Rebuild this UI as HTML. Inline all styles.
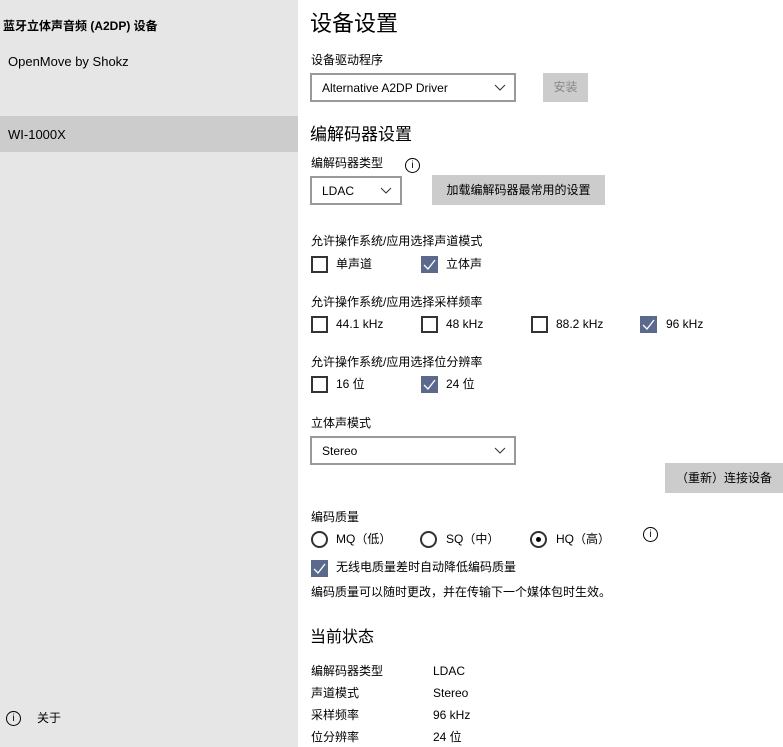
<!DOCTYPE html><html><head><meta charset="utf-8"><style>
body{margin:0;width:783px;height:747px;position:relative;overflow:hidden;background:#fff;font-family:"Liberation Sans","Noto Sans CJK SC",sans-serif;font-size:12px;color:#000}
.a{position:absolute;white-space:nowrap;line-height:17px}
#left{position:absolute;left:0;top:0;width:298px;height:747px;background:#e6e6e6}
.sel{position:absolute;left:0;top:116px;width:298px;height:36px;background:#cccccc}
.h1{font-size:22px;line-height:30px}.h2{font-size:17px;line-height:24px}.h3{font-size:16px;line-height:22px}
.dd{position:absolute;border:2px solid #999;background:#fff;box-sizing:border-box;height:29px;font-size:12px}
.dd span{position:absolute;left:10px;top:6px}
.dd svg{position:absolute;right:8px;top:9px}
.btn{position:absolute;background:#ccc;font-size:12px;text-align:center;box-sizing:border-box}
.cb{position:absolute;width:17px;height:17px;box-sizing:border-box;border:2px solid #333;background:#fff}
.cb.on{background:#5b6a8c;border:none}
.rd{position:absolute;width:17px;height:17px;box-sizing:border-box;border:2px solid #333;border-radius:50%}
.info{position:absolute;width:15px;height:15px;box-sizing:border-box;border:1px solid #000;border-radius:50%;font-size:10px;text-align:center;line-height:13px}
</style></head><body>
<div id="left"><div class="sel"></div></div>
<div class="a" style="left:3px;top:18px;font-weight:bold;font-size:12px">蓝牙立体声音频 (A2DP) 设备</div>
<div class="a" style="left:8px;top:53px;font-size:13px">OpenMove by Shokz</div>
<div class="a" style="left:8px;top:126px;font-size:13px">WI-1000X</div>
<div class="info" style="left:6px;top:711px">i</div>
<div class="a" style="left:37px;top:710px">关于</div>

<div class="a h1" style="left:310px;top:9px">设备设置</div>
<div class="a" style="left:311px;top:52px">设备驱动程序</div>
<div class="dd" style="left:310px;top:73px;width:206px"><span>Alternative A2DP Driver</span><svg width="12" height="8"><path d="M1 1L6 6L11 1" stroke="#333" fill="none"/></svg></div>
<div class="btn" style="left:543px;top:73px;width:45px;height:29px;line-height:29px;color:#888">安装</div>
<div class="a h2" style="left:310px;top:123px">编解码器设置</div>
<div class="a" style="left:311px;top:155px">编解码器类型</div>
<div class="info" style="left:405px;top:158px">i</div>
<div class="dd" style="left:310px;top:176px;width:92px"><span>LDAC</span><svg width="12" height="8"><path d="M1 1L6 6L11 1" stroke="#333" fill="none"/></svg></div>
<div class="btn" style="left:432px;top:175px;width:173px;height:30px;line-height:30px">加载编解码器最常用的设置</div>

<div class="a" style="left:311px;top:233px">允许操作系统/应用选择声道模式</div>
<div class="cb" style="left:311px;top:256px"></div><div class="a" style="left:336px;top:256px">单声道</div>
<div class="cb on" style="left:421px;top:256px"><svg width="17" height="17"><path d="M3 9L7 13L14 4" stroke="#fff" stroke-width="1.3" fill="none"/></svg></div><div class="a" style="left:446px;top:256px">立体声</div>

<div class="a" style="left:311px;top:294px">允许操作系统/应用选择采样频率</div>
<div class="cb" style="left:311px;top:316px"></div><div class="a" style="left:336px;top:316px">44.1 kHz</div>
<div class="cb" style="left:421px;top:316px"></div><div class="a" style="left:446px;top:316px">48 kHz</div>
<div class="cb" style="left:531px;top:316px"></div><div class="a" style="left:556px;top:316px">88.2 kHz</div>
<div class="cb on" style="left:640px;top:316px"><svg width="17" height="17"><path d="M3 9L7 13L14 4" stroke="#fff" stroke-width="1.3" fill="none"/></svg></div><div class="a" style="left:666px;top:316px">96 kHz</div>

<div class="a" style="left:311px;top:354px">允许操作系统/应用选择位分辨率</div>
<div class="cb" style="left:311px;top:376px"></div><div class="a" style="left:336px;top:376px">16 位</div>
<div class="cb on" style="left:421px;top:376px"><svg width="17" height="17"><path d="M3 9L7 13L14 4" stroke="#fff" stroke-width="1.3" fill="none"/></svg></div><div class="a" style="left:446px;top:376px">24 位</div>

<div class="a" style="left:311px;top:415px">立体声模式</div>
<div class="dd" style="left:310px;top:436px;width:206px"><span>Stereo</span><svg width="12" height="8"><path d="M1 1L6 6L11 1" stroke="#333" fill="none"/></svg></div>
<div class="btn" style="left:665px;top:463px;width:118px;height:30px;line-height:30px">（重新）连接设备</div>

<div class="a" style="left:311px;top:509px">编码质量</div>
<div class="rd" style="left:311px;top:531px"></div><div class="a" style="left:336px;top:531px">MQ（低）</div>
<div class="rd" style="left:420px;top:531px"></div><div class="a" style="left:446px;top:531px">SQ（中）</div>
<div class="rd" style="left:530px;top:531px"><div style="position:absolute;left:4px;top:4px;width:5px;height:5px;border-radius:50%;background:#000"></div></div><div class="a" style="left:556px;top:531px">HQ（高）</div>
<div class="info" style="left:643px;top:527px">i</div>
<div class="cb on" style="left:311px;top:560px"><svg width="17" height="17"><path d="M3 9L7 13L14 4" stroke="#fff" stroke-width="1.3" fill="none"/></svg></div><div class="a" style="left:336px;top:559px">无线电质量差时自动降低编码质量</div>
<div class="a" style="left:311px;top:584px">编码质量可以随时更改，并在传输下一个媒体包时生效。</div>

<div class="a h3" style="left:310px;top:627px">当前状态</div>
<div class="a" style="left:311px;top:663px">编解码器类型</div><div class="a" style="left:433px;top:663px">LDAC</div>
<div class="a" style="left:311px;top:685px">声道模式</div><div class="a" style="left:433px;top:685px">Stereo</div>
<div class="a" style="left:311px;top:707px">采样频率</div><div class="a" style="left:433px;top:707px">96 kHz</div>
<div class="a" style="left:311px;top:729px">位分辨率</div><div class="a" style="left:433px;top:729px">24 位</div>
</body></html>
